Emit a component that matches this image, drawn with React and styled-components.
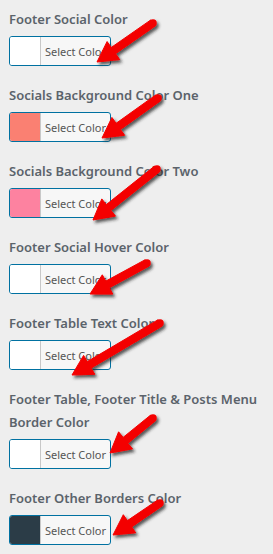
import React from "react";
import styled, { createGlobalStyle } from "styled-components";

const Global = createGlobalStyle`
  html, body { margin: 0; padding: 0; background: #eeeeee; }
  body { font-family: "Noto Sans", "Open Sans", sans-serif; }
`;

const Page = styled.div`
  position: relative;
  width: 273px;
  min-height: 554px;
  padding: 8px 0 0 9px;
  box-sizing: border-box;
  display: flex;
  flex-direction: column;
  gap: 18px;
  overflow: hidden;
`;

const Section = styled.div`
  display: flex;
  flex-direction: column;
  gap: 5px;
`;

const Title = styled.div`
  font-size: 13px;
  font-weight: 600;
  line-height: 23px;
  color: #5b636b;
  width: 262px;
`;

const ColorButton = styled.button`
  display: flex;
  align-items: stretch;
  width: 102px;
  height: 30px;
  padding: 0;
  border: 1px solid #0071a1;
  border-radius: 3px;
  background: #f7f7f7;
  overflow: hidden;
  cursor: pointer;
  font-family: inherit;
`;

const Swatch = styled.span`
  width: 30px;
  flex: none;
  background: ${(p) => p.$color};
  border-right: 1px solid #c8c8c8;
`;

const ButtonText = styled.span`
  flex: 1;
  display: flex;
  align-items: center;
  justify-content: center;
  font-size: 11px;
  color: #555555;
  white-space: nowrap;
  padding-top: 1px;
`;

const Overlay = styled.svg`
  position: absolute;
  left: 0;
  top: 0;
  width: 273px;
  height: 554px;
  pointer-events: none;
  overflow: visible;
`;

const items = [
  { title: "Footer Social Color", color: "#ffffff" },
  { title: "Socials Background Color One", color: "#fa8072" },
  { title: "Socials Background Color Two", color: "#fd82a0" },
  { title: "Footer Social Hover Color", color: "#ffffff" },
  { title: "Footer Table Text Color", color: "#ffffff" },
  { title: "Footer Table, Footer Title & Posts Menu Border Color", color: "#ffffff" },
  { title: "Footer Other Borders Color", color: "#2b3c47" },
];

const arrows = [
  { tail: [153, 23], tip: [97, 62] },
  { tail: [158, 98], tip: [102, 138] },
  { tail: [157, 169], tip: [93, 220] },
  { tail: [147, 263], tip: [90, 294] },
  { tail: [160, 323], tip: [72, 375] },
  { tail: [153, 418], tip: [110, 453] },
  { tail: [160, 503], tip: [113, 535] },
];

function arrowPoints(tail, tip) {
  const [x1, y1] = tail;
  const [x2, y2] = tip;
  const dx = x2 - x1;
  const dy = y2 - y1;
  const len = Math.hypot(dx, dy);
  const ux = dx / len;
  const uy = dy / len;
  const nx = -uy;
  const ny = ux;
  const headLen = 20;
  const headW = 11;
  const shaftW = 3.8;
  const bx = x2 - ux * headLen;
  const by = y2 - uy * headLen;
  const pts = [
    [x1 + nx * shaftW, y1 + ny * shaftW],
    [bx + nx * shaftW, by + ny * shaftW],
    [bx + nx * headW, by + ny * headW],
    [x2, y2],
    [bx - nx * headW, by - ny * headW],
    [bx - nx * shaftW, by - ny * shaftW],
    [x1 - nx * shaftW, y1 - ny * shaftW],
  ];
  return pts.map((p) => p.map((v) => v.toFixed(1)).join(",")).join(" ");
}

function Arrow({ tail, tip }) {
  return (
    <g filter="url(#shadow)">
      <polygon points={arrowPoints(tail, tip)} fill="#f40000" strokeLinejoin="round" stroke="#f40000" strokeWidth="1" />
      <circle cx={tail[0]} cy={tail[1]} r="3.8" fill="#f40000" />
    </g>
  );
}

export default function App() {
  return (
    <>
      <Global />
      <Page>
        {items.map((it) => (
          <Section key={it.title}>
            <Title>{it.title}</Title>
            <ColorButton type="button">
              <Swatch $color={it.color} />
              <ButtonText>Select Color</ButtonText>
            </ColorButton>
          </Section>
        ))}
        <Overlay viewBox="0 0 273 554">
          <defs>
            <filter id="shadow" x="-30%" y="-30%" width="160%" height="160%">
              <feDropShadow dx="2" dy="2.5" stdDeviation="1.6" floodColor="#222" floodOpacity="0.75" />
            </filter>
          </defs>
          {arrows.map((a, i) => (
            <Arrow key={i} {...a} />
          ))}
        </Overlay>
      </Page>
    </>
  );
}
